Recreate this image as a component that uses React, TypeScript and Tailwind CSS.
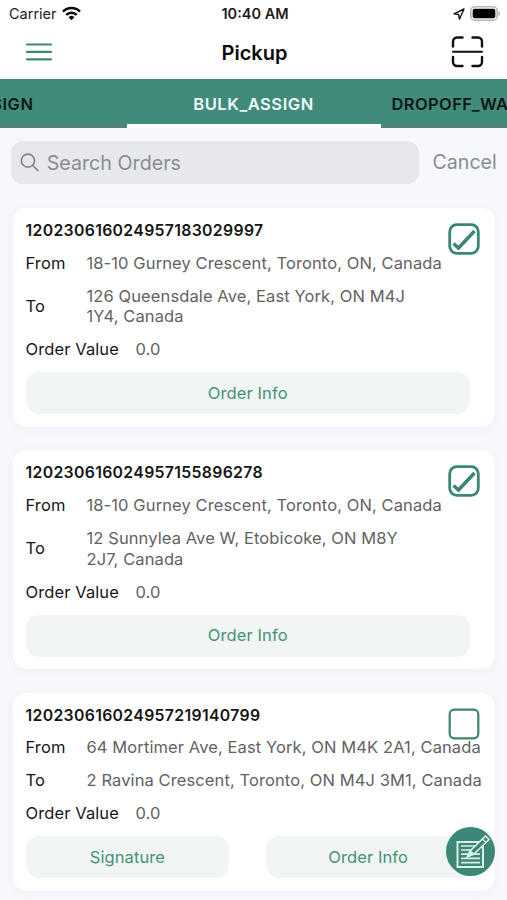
import React from "react";

type Order = {
  id: string;
  from: string;
  to: string[];
  value: string;
  selected: boolean;
  needsSignature?: boolean;
};

const INITIAL_ORDERS: Order[] = [
  {
    id: "120230616024957183029997",
    from: "18-10 Gurney Crescent, Toronto, ON, Canada",
    to: ["126 Queensdale Ave, East York, ON M4J", "1Y4, Canada"],
    value: "0.0",
    selected: true,
  },
  {
    id: "120230616024957155896278",
    from: "18-10 Gurney Crescent, Toronto, ON, Canada",
    to: ["12 Sunnylea Ave W, Etobicoke, ON M8Y", "2J7, Canada"],
    value: "0.0",
    selected: true,
  },
  {
    id: "120230616024957219140799",
    from: "64 Mortimer Ave, East York, ON M4K 2A1, Canada",
    to: ["2 Ravina Crescent, Toronto, ON M4J 3M1, Canada"],
    value: "0.0",
    selected: false,
    needsSignature: true,
  },
];

function StatusBar() {
  return (
    <div className="grid h-[27px] grid-cols-[1fr_auto_1fr] items-center pl-[9px] pr-[6px] text-[14.5px] text-[#1c1c1c]">
      <div className="flex items-center gap-[5px]">
        <span>Carrier</span>
        <svg width="19" height="15" viewBox="0 0 19 15" fill="none" stroke="#0a0a0a" strokeWidth="2.5">
          <path d="M1 5.6a12 12 0 0 1 17 0" />
          <path d="M4.2 8.9a7.5 7.5 0 0 1 10.6 0" />
          <path d="M9.5 14.2 6.6 11.2a4.1 4.1 0 0 1 5.8 0z" fill="#0a0a0a" stroke="none" />
        </svg>
      </div>
      <span className="font-semibold">10:40 AM</span>
      <div className="flex items-center justify-end gap-[5px]">
        <svg width="12" height="12" viewBox="0 0 12 12" fill="none" stroke="#111" strokeWidth="1.4" strokeLinejoin="round">
          <path d="M11 1 1 5.8l4.6.7.9 4.5z" />
        </svg>
        <svg width="31" height="15" viewBox="0 0 31 15">
          <rect x="0.8" y="0.8" width="26.4" height="13.4" rx="4" fill="#fff" stroke="#b5b5b5" strokeWidth="1.6" />
          <rect x="2.7" y="2.7" width="22.6" height="9.6" rx="2" fill="#000" />
          <path d="M28.5 5v5c1-.4 1.7-1.3 1.7-2.5S29.5 5.4 28.5 5z" fill="#b5b5b5" />
        </svg>
      </div>
    </div>
  );
}

function Header() {
  return (
    <header className="grid h-[52px] grid-cols-[1fr_auto_1fr] items-center pb-[2px] pl-[25px] pr-[23px]">
      <button aria-label="Menu" className="justify-self-start">
        <svg width="28" height="20" viewBox="0 0 28 20" stroke="#3e8873" strokeWidth="2.2" strokeLinecap="round">
          <path d="M2 2.5h24M2 9.9h24M2 17.3h24" />
        </svg>
      </button>
      <h1 className="pt-px text-[20px] font-semibold text-[#0a0a0a]">Pickup</h1>
      <button aria-label="Scan" className="justify-self-end">
        <svg width="33" height="32" viewBox="0 0 33 32" fill="none" stroke="#111" strokeWidth="2.4" strokeLinecap="round">
          <path d="M2 10.5V5.5a4 4 0 0 1 4-4h5.5M21.5 1.5H27a4 4 0 0 1 4 4v5M31 21v5a4 4 0 0 1-4 4h-5.5M11.5 30H6a4 4 0 0 1-4-4v-5" />
          <path d="M2 15.8h29" strokeWidth="2" />
        </svg>
      </button>
    </header>
  );
}

function Tabs() {
  return (
    <nav className="flex h-[49px] justify-center overflow-hidden bg-[#418b7b] text-[16.5px] font-semibold tracking-[0.55px]">
      <button className="w-[254px] shrink-0 border-b-2 border-[#5f7f76] pl-[2px] pt-[3px] text-[#0c1614]">ASSIGN</button>
      <button className="w-[254px] shrink-0 border-b-4 border-white pt-[5px] text-[#eefaf7]">BULK_ASSIGN</button>
      <button className="w-[254px] shrink-0 whitespace-nowrap border-b-2 border-[#5f7f76] pl-[11px] pt-[3px] text-left tracking-[0.4px] text-[#0c1614]">
        DROPOFF_WAREHOUSE
      </button>
    </nav>
  );
}

function SearchBar() {
  return (
    <div className="flex items-center px-[11px] pt-[13px]">
      <label className="flex h-[43px] w-[408px] shrink-0 items-center gap-[6px] rounded-[12px] bg-[#e7e8ec] pl-[9px]">
        <svg width="21" height="21" viewBox="0 0 21 21" fill="none" stroke="#85868a" strokeWidth="1.8" strokeLinecap="round">
          <circle cx="8.5" cy="8.5" r="7" />
          <path d="m13.7 13.7 5.5 5.5" />
        </svg>
        <input
          className="w-full bg-transparent pl-px pt-[2px] text-[19.7px] text-[#77787c] outline-none placeholder:text-[#8b8c91]"
          placeholder="Search Orders"
        />
      </label>
      <button className="ml-[13.5px] text-[19.6px] text-[#8b8c91]">Cancel</button>
    </div>
  );
}

function Checkbox({ checked, onChange }: { checked: boolean; onChange: () => void }) {
  return (
    <button role="checkbox" aria-checked={checked} onClick={onChange} className="absolute right-[15px] top-[15px]">
      <svg width="32" height="32" viewBox="0 0 32 32" fill="none" stroke="#388673">
        <rect x="1.7" y="1.7" width="28.6" height="28.6" rx={checked ? 7 : 4.5} strokeWidth={checked ? 2.8 : 2.2} />
        {checked && <path d="m5.5 20.5 5 4.500L26.500 8" strokeWidth="3.4" />}
      </svg>
    </button>
  );
}

function ActionButton({ label }: { label: string }) {
  return (
    <button className="h-[42px] flex-1 rounded-[13px] bg-[#f1f5f4] text-[16.5px] tracking-[0.1px] text-[#45917b]">
      {label}
    </button>
  );
}

function OrderCard({ order, onToggle }: { order: Order; onToggle: () => void }) {
  return (
    <article className="relative rounded-[14px] bg-white px-[12.5px] pb-[12.6px] pt-[12.9px] text-[16.5px] leading-[20.5px] tracking-[0.1px] text-[#161616] shadow-[0_2px_10px_rgba(60,80,110,0.05)]">
      <h2 className="text-[15.8px] font-semibold leading-[20px] tracking-[0.33px]">{order.id}</h2>
      <div className="mt-[11.7px] flex items-center">
        <span className="w-[61px]">From</span>
        <span className="whitespace-nowrap text-[#626262]">{order.from}</span>
      </div>
      <div className="mt-[12.5px] flex items-center">
        <span className="w-[61px]">To</span>
        <div className="whitespace-nowrap text-[#626262]">
          {order.to.map((line) => (
            <p key={line}>{line}</p>
          ))}
        </div>
      </div>
      <div className="mt-[12.5px] flex items-center">
        <span className="w-[110px]">Order Value</span>
        <span className="text-[#626262]">{order.value}</span>
      </div>
      <div className="mr-[12.5px] mt-[12.5px] flex gap-[37px]">
        {order.needsSignature && <ActionButton label="Signature" />}
        <ActionButton label="Order Info" />
      </div>
      <Checkbox checked={order.selected} onChange={onToggle} />
    </article>
  );
}

export default function App() {
  const [orders, setOrders] = React.useState(INITIAL_ORDERS);

  function toggle(id: string) {
    setOrders((prev) => prev.map((o) => (o.id === id ? { ...o, selected: !o.selected } : o)));
  }

  return (
    <div className="relative h-[900px] w-[507px] overflow-hidden bg-[#f6f8fc] font-['Inter','Liberation_Sans',sans-serif]">
      <div className="bg-white">
        <StatusBar />
        <Header />
      </div>
      <Tabs />
      <SearchBar />
      <main className="flex flex-col gap-[23.6px] pl-[13px] pr-[12px] pt-[24.2px]">
        {orders.map((order) => (
          <OrderCard key={order.id} order={order} onToggle={() => toggle(order.id)} />
        ))}
      </main>
      <button
        aria-label="Sign selected orders"
        className="absolute bottom-[24px] right-[12px] flex h-[49px] w-[49px] items-center justify-center rounded-full bg-[#3c8775]"
      >
        <svg width="49" height="49" viewBox="0 0 49 49" fill="none" stroke="#dcefe9">
          <path d="M11.5 15h25.500v25H11.500z" strokeWidth="2" />
          <path d="M15 19h16M15 23h13M15 27.200h9M28 27.200h6M15 31.400h19M15 35.600h19" strokeWidth="1.7" />
          <path d="m22 29.500 2.500-6L39.500 9l3.500 3.500L28 27z" fill="#3c8775" strokeWidth="1.7" strokeLinejoin="round" />
          <path d="m21 30 2.800-6.500 4.200 3.500zM36.500 12l3.500 3.500" fill="#dcefe9" strokeWidth="1.2" />
        </svg>
      </button>
    </div>
  );
}
